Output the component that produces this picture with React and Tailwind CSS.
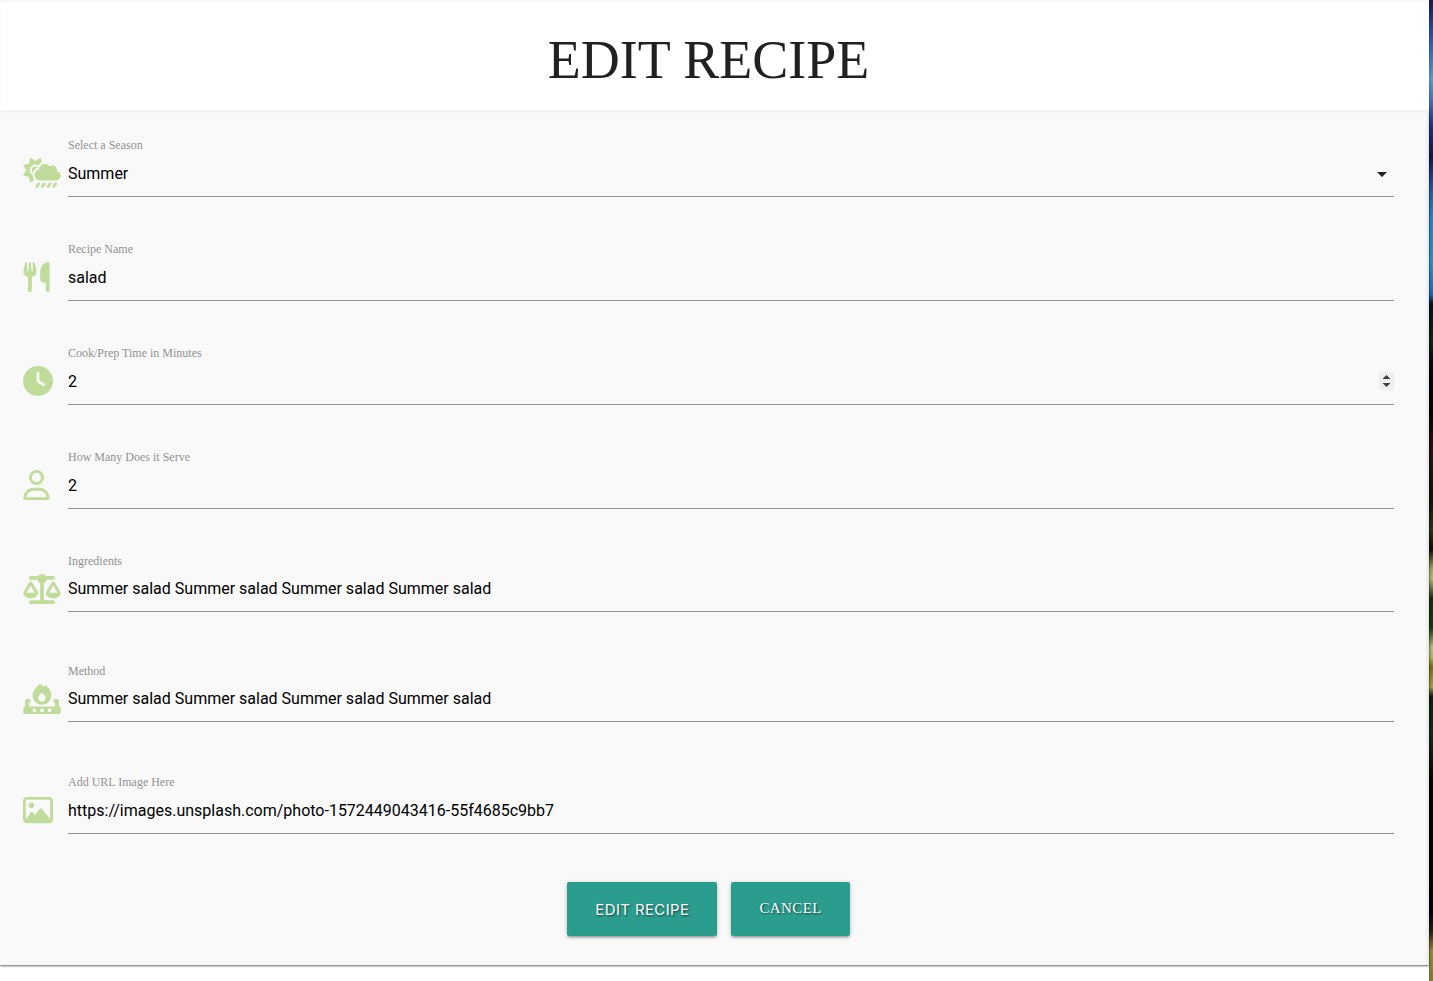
import React from "react";
import {
  FaCloudSunRain,
  FaUtensils,
  FaClock,
  FaRegUser,
  FaScaleBalanced,
  FaFireBurner,
  FaRegImage,
} from "react-icons/fa6";

const control =
  "block w-full rounded-none border-0 border-b border-[#949494] bg-transparent p-0 font-[Roboto,sans-serif] text-base text-black outline-none";

function Field({ id, label, icon: Icon, iconWidth, className, children }) {
  return (
    <div className={`flex ${className}`}>
      <div className="w-[45px] shrink-0 pt-[21px] text-[#c0dc9b]">
        <Icon className={`h-[30px] ${iconWidth}`} aria-hidden="true" />
      </div>
      <div className="min-w-0 flex-1">
        <label htmlFor={id} className="block text-xs leading-4 text-[#929292]">
          {label}
        </label>
        {children}
      </div>
    </div>
  );
}

const button =
  "h-[54px] rounded-xs bg-[#2a9d8f] px-7 text-[15px] tracking-wide text-white shadow-[0_2px_2px_0_rgba(0,0,0,0.14),0_3px_1px_-2px_rgba(0,0,0,0.12),0_1px_5px_0_rgba(0,0,0,0.2)] [text-shadow:1px_1px_2px_rgba(0,0,0,0.6)]";

export default function App() {
  return (
    <div className="flex min-h-screen bg-white font-['Liberation_Serif',serif]">
      <div className="relative z-10 flex min-w-0 flex-1 flex-col bg-white shadow-[0_0_5px_rgba(0,0,0,0.35)]">
        <header className="h-[111px] pt-7 pr-3 shadow-[inset_0_2px_3px_rgba(0,0,0,0.04)]">
          <h1 className="text-center text-[54px] leading-16 text-[#212121]">EDIT RECIPE</h1>
        </header>
        <main className="border-t border-[#f0f0f0] bg-[#f9f9f9] pt-[25px] pr-3 pb-[29px] shadow-[0_1px_2px_rgba(0,0,0,0.6),inset_-3px_0_3px_-1px_rgba(0,0,0,0.08)]">
          <form className="px-[23px]" onSubmit={(e) => e.preventDefault()}>
            <Field
              id="season"
              label="Select a Season"
              icon={FaCloudSunRain}
              iconWidth="w-[38px]"
              className="mb-11"
            >
              <div className="relative">
                <select id="season" defaultValue="Summer" className={`${control} h-11 appearance-none pb-0.5`}>
                  <option>Spring</option>
                  <option>Summer</option>
                  <option>Autumn</option>
                  <option>Winter</option>
                </select>
                <svg
                  className="pointer-events-none absolute top-[9px] right-0 size-6 fill-[#212121]"
                  viewBox="0 0 24 24"
                  aria-hidden="true"
                >
                  <path d="M7 10l5 5 5-5z" />
                </svg>
              </div>
            </Field>
            <Field id="name" label="Recipe Name" icon={FaUtensils} iconWidth="w-[27px]" className="mb-11">
              <input id="name" type="text" defaultValue="salad" className={`${control} h-11 pb-0.5`} />
            </Field>
            <Field
              id="time"
              label="Cook/Prep Time in Minutes"
              icon={FaClock}
              iconWidth="w-[30px]"
              className="mb-11"
            >
              <div className="relative">
                <input
                  id="time"
                  type="number"
                  defaultValue="2"
                  className={`${control} h-11 pb-0.5 [&::-webkit-inner-spin-button]:opacity-100`}
                />
                <svg
                  className="pointer-events-none absolute top-[11px] right-0 h-[18px] w-[15px]"
                  viewBox="0 0 15 18"
                  aria-hidden="true"
                >
                  <path fill="#efefef" d="M0 0h15v18H0z" />
                  <path fill="#3f3f3f" d="M3.5 7l4-4 4 4zM3.5 11l4 4 4-4z" />
                </svg>
              </div>
            </Field>
            <Field
              id="serves"
              label="How Many Does it Serve"
              icon={FaRegUser}
              iconWidth="w-[27px]"
              className="mb-11"
            >
              <input id="serves" type="number" defaultValue="2" className={`${control} h-11 pb-0.5`} />
            </Field>
            <Field
              id="ingredients"
              label="Ingredients"
              icon={FaScaleBalanced}
              iconWidth="w-[38px]"
              className="mb-[51px]"
            >
              <textarea
                id="ingredients"
                rows={1}
                defaultValue="Summer salad Summer salad Summer salad Summer salad"
                className={`${control} h-[43px] resize-none overflow-hidden pt-2`}
              />
            </Field>
            <Field
              id="method"
              label="Method"
              icon={FaFireBurner}
              iconWidth="w-[38px]"
              className="mb-[52px]"
            >
              <textarea
                id="method"
                rows={1}
                defaultValue="Summer salad Summer salad Summer salad Summer salad"
                className={`${control} h-[43px] resize-none overflow-hidden pt-2`}
              />
            </Field>
            <Field
              id="image"
              label="Add URL Image Here"
              icon={FaRegImage}
              iconWidth="w-[30px]"
              className="mb-12"
            >
              <input
                id="image"
                type="text"
                defaultValue="https://images.unsplash.com/photo-1572449043416-55f4685c9bb7"
                className={`${control} h-11 pb-0.5`}
              />
            </Field>
            <div className="flex justify-center gap-[14px]">
              <button type="submit" className={`${button} pt-0.5 font-[Inter,sans-serif]`}>
                EDIT RECIPE
              </button>
              <button type="button" className={`${button} pb-0.5`}>
                CANCEL
              </button>
            </div>
          </form>
        </main>
      </div>
      <div className="w-1 shrink-0 bg-[linear-gradient(to_bottom,#171d52_0%,#2b5fb0_4%,#5d9fd0_8%,#4a7fc4_10%,#1d3480_13%,#141a50_16%,#2358a8_19%,#2689cb_22%,#2d96cc_27%,#1c6fbe_30%,#07131f_31%,#13261a_35%,#030a0e_37%,#050305_42%,#251917_46%,#0e150a_51%,#2c351c_54%,#0f1206_56%,#a5ab5c_58%,#b4c074_59%,#123012_61%,#173c0c_64%,#b9c67c_66%,#b1bb60_67%,#73751c_68%,#a3a848_70%,#0b2310_71%,#172b1b_75%,#020503_80%,#000000_88%,#030312_93%,#26251c_95%,#9a9238_97%,#86802f_100%)]" />
    </div>
  );
}
